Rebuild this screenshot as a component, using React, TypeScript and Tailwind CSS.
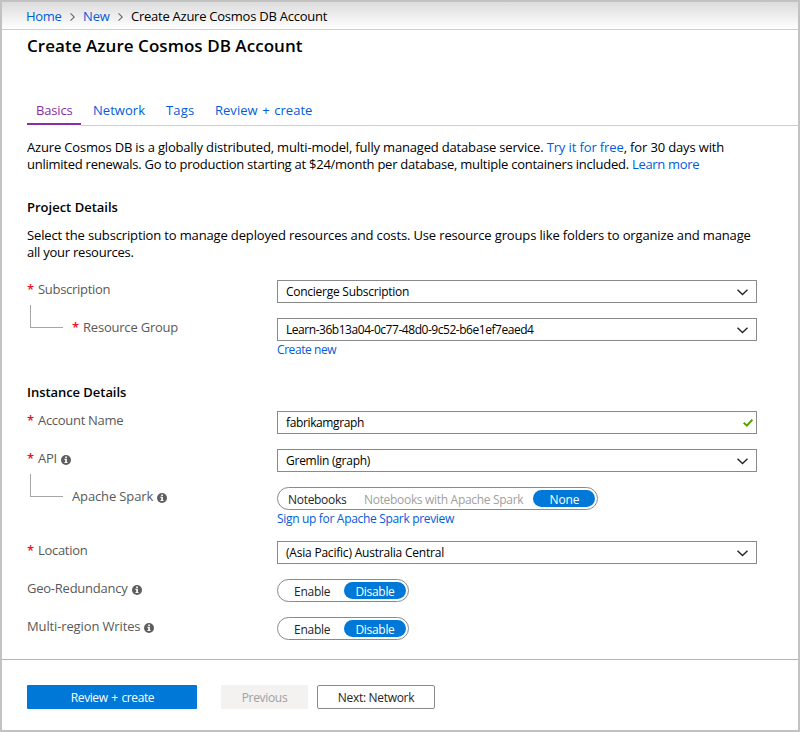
import type { ReactNode } from "react";

function Label({ text, tracking, required, info, nested }: { text: string; tracking: string; required?: boolean; info?: boolean; nested?: boolean }) {
  return (
    <div className="flex h-[38px] w-[250px] shrink-0 items-start pt-px leading-[17px] whitespace-nowrap text-[#595959]">
      {nested && <div className="-mt-[14px] mr-[9px] ml-[3px] h-[23px] w-[33px] shrink-0 border-b border-l border-[#a6a6a6]" />}
      {required && <span className="w-[11px] font-semibold text-[#e81123]">*</span>}
      <span className={tracking}>{text}</span>
      {info && <InfoIcon />}
    </div>
  );
}

function InfoIcon() {
  return (
    <svg className="mt-[5px] ml-[4px] h-[10px] w-[10px]" viewBox="0 0 10 10">
      <circle cx="5" cy="5" r="5" fill="#5e5e5e" />
      <path d="M4.2 1.5h1.7v1.4H4.2zM3.3 3.8h2.6v3.4h.8v.9H3.3v-.9h.9V4.7h-.9z" fill="#fff" />
    </svg>
  );
}

function Chevron() {
  return (
    <svg className="mt-px h-[7px] w-[11px]" viewBox="0 0 11 7" fill="none" stroke="#262626" strokeWidth="1.4">
      <path d="M0.5 0.7 5.5 5.6 10.5 0.7" />
    </svg>
  );
}

function Check() {
  return (
    <svg className="mt-px h-[8px] w-[10px]" viewBox="0 0 10 8" fill="none" stroke="#57a300" strokeWidth="2">
      <path d="M0.7 3.8 3.9 6.6 9.3 0.7" />
    </svg>
  );
}

function Field({ text, tracking, valid }: { text: string; tracking: string; valid?: boolean }) {
  return (
    <div className={`flex h-[23px] w-[480px] items-center justify-between border border-[#8a8a8a] pl-[8px] text-[12px] ${valid ? "pr-[3px]" : "pr-[8px]"}`}>
      <span className={tracking}>{text}</span>
      {valid ? <Check /> : <Chevron />}
    </div>
  );
}

function Pill({ children }: { children: ReactNode }) {
  return <div className="flex h-[23px] w-fit items-center rounded-full border border-[#8a8a8a] pr-[2px] text-[12px] leading-[17px] whitespace-nowrap">{children}</div>;
}

function EnableDisable() {
  return (
    <Pill>
      <span className="w-[66px] pt-px pl-[16px] tracking-[-0.25px] text-[#252525]">Enable</span>
      <span className="h-[17px] w-[62px] rounded-full bg-[#0078d7] pt-px text-center leading-[17px] tracking-[-0.3px] text-white">Disable</span>
    </Pill>
  );
}

function Separator() {
  return (
    <svg className="h-[8px] w-[5px]" viewBox="0 0 5 8" fill="none" stroke="#666" strokeWidth="1.1">
      <path d="M0.5 0.4 4.3 4 0.5 7.6" />
    </svg>
  );
}

export default function App() {
  return (
    <div className="flex h-[732px] w-[800px] flex-col overflow-hidden border-2 border-[#c2c2c2] bg-white font-['Open_Sans',sans-serif] text-[13px] leading-[17px] text-black">
      <nav className="flex h-[28px] shrink-0 items-center border-b border-[#cfcfcf] bg-linear-to-b from-[#dcdcdc] to-white pt-[2px] pl-[24px] whitespace-nowrap">
        <a className="w-[44px] tracking-[-0.3px] text-[#015cda]">Home</a>
        <Separator />
        <a className="ml-[8px] w-[35px] tracking-[-0.15px] text-[#015cda]">New</a>
        <Separator />
        <span className="ml-[8px] tracking-[-0.25px]">Create Azure Cosmos DB Account</span>
      </nav>
      <main className="flex h-[629px] shrink-0 flex-col pl-[25px]">
        <h1 className="mt-[4px] text-[17px] leading-[24px] font-semibold tracking-[0.05px]">Create Azure Cosmos DB Account</h1>
        <div className="mt-[41px] flex h-[27px] whitespace-nowrap text-[#015cda]">
          <div className="h-[26px] w-[54px] border-b-2 border-[#8a2da5] pt-[3px] pl-[9px] tracking-[-0.15px] text-[#8a2da5]">Basics</div>
          <div className="flex grow border-b border-[#cfcfcf] pt-[3px]">
            <div className="w-[73px] pl-[12px] tracking-[0.05px]">Network</div>
            <div className="w-[49px] pl-[12px] tracking-[0.15px]">Tags</div>
            <div className="pl-[12px] tracking-[0.02px] [word-spacing:1.2px]">Review + create</div>
          </div>
        </div>
        <div className="mt-[13px] whitespace-nowrap">
          <p>
            <span className="tracking-[-0.175px]">Azure Cosmos DB is a globally distributed, multi-model, fully managed database service. </span>
            <a className="tracking-[-0.12px] text-[#015cda]">Try it for free</a>
            <span className="tracking-[-0.15px]">, for 30 days with</span>
          </p>
          <p>
            <span className="tracking-[-0.25px]">unlimited renewals. Go to production starting at $24/month per database, multiple containers included. </span>
            <a className="tracking-[-0.33px] text-[#015cda]">Learn more</a>
          </p>
        </div>
        <h2 className="mt-[26px] font-semibold">Project Details</h2>
        <div className="mt-[11px] whitespace-nowrap">
          <p className="tracking-[-0.143px]">Select the subscription to manage deployed resources and costs. Use resource groups like folders to organize and manage</p>
          <p className="tracking-[-0.24px]">all your resources.</p>
        </div>
        <div className="mt-[19px] flex">
          <Label required text="Subscription" tracking="tracking-[-0.29px]" />
          <Field text="Concierge Subscription" tracking="tracking-[-0.26px]" />
        </div>
        <div className="flex h-[39px]">
          <Label nested required text="Resource Group" tracking="tracking-[-0.21px]" />
          <div>
            <Field text="Learn-36b13a04-0c77-48d0-9c52-b6e1ef7eaed4" tracking="tracking-[-0.46px]" />
            <a className="block pt-px text-[12px] leading-[16px] tracking-[-0.43px] text-[#015cda]">Create new</a>
          </div>
        </div>
        <h2 className="mt-[27px] font-semibold tracking-[-0.05px]">Instance Details</h2>
        <div className="mt-[10px] flex">
          <Label required text="Account Name" tracking="tracking-[-0.3px]" />
          <Field valid text="fabrikamgraph" tracking="tracking-[-0.37px]" />
        </div>
        <div className="flex">
          <Label required info text="API" tracking="tracking-[-0.25px]" />
          <Field text="Gremlin (graph)" tracking="tracking-[-0.25px]" />
        </div>
        <div className="flex h-[54px]">
          <Label nested info text="Apache Spark" tracking="tracking-[-0.13px]" />
          <div>
            <Pill>
              <span className="w-[76px] pt-px pl-[10px] tracking-[-0.3px] text-[#252525]">Notebooks</span>
              <span className="w-[179px] pt-px pl-[10px] tracking-[-0.31px] text-[#a0a0a0]">Notebooks with Apache Spark</span>
              <span className="h-[17px] w-[62px] rounded-full bg-[#0078d7] pt-px pl-px text-center tracking-[-0.15px] text-white">None</span>
            </Pill>
            <a className="mt-px block text-[12px] leading-[16px] tracking-[-0.32px] text-[#015cda]">Sign up for Apache Spark preview</a>
          </div>
        </div>
        <div className="flex">
          <Label required text="Location" tracking="tracking-[-0.3px]" />
          <Field text="(Asia Pacific) Australia Central" tracking="tracking-[-0.21px]" />
        </div>
        <div className="flex">
          <Label info text="Geo-Redundancy" tracking="tracking-[-0.24px]" />
          <EnableDisable />
        </div>
        <div className="flex">
          <Label info text="Multi-region Writes" tracking="tracking-[-0.13px]" />
          <EnableDisable />
        </div>
      </main>
      <footer className="flex h-[71px] shrink-0 border-t border-[#b5b5b5] pt-[25px] pl-[25px] text-[12px]">
        <button className="h-[24px] w-[170px] rounded-[1px] bg-[#0078d7] pl-px tracking-[-0.4px] text-white [word-spacing:1px]">Review + create</button>
        <button className="ml-[24px] h-[24px] w-[87px] rounded-[1px] bg-[#f3f2f1] tracking-[-0.32px] text-[#a0a0a0]">Previous</button>
        <button className="ml-[9px] h-[24px] w-[118px] rounded-[2px] border border-[#8a8a8a] tracking-[-0.3px] text-[#252525]">Next: Network</button>
      </footer>
    </div>
  );
}
